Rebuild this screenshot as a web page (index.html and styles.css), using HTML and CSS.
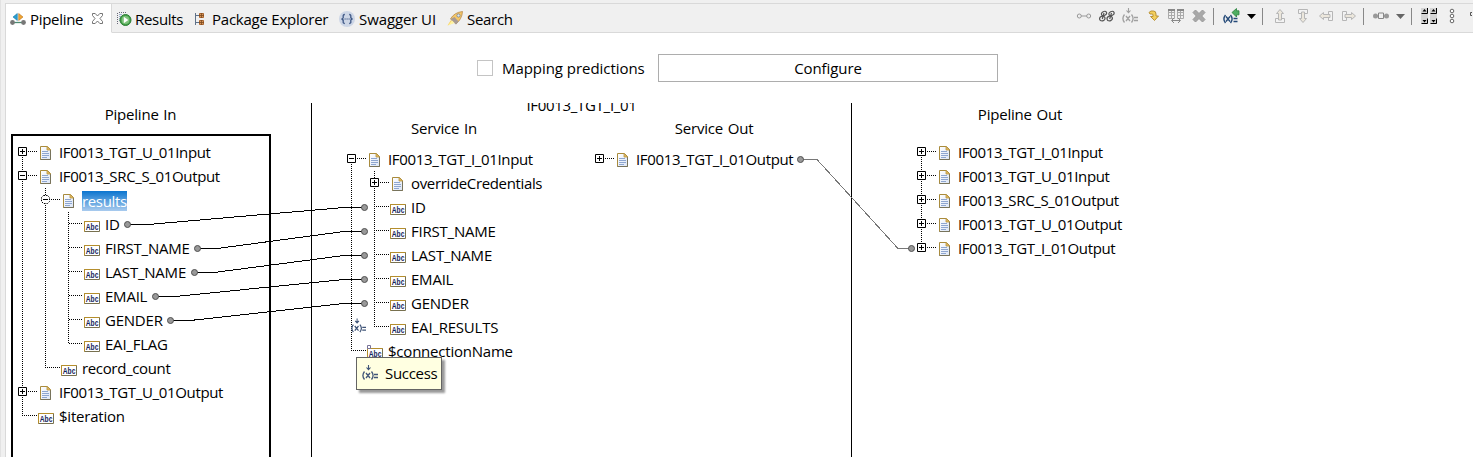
FILE: index.html
```html
<!DOCTYPE html>
<html lang="en">
<head>
<meta charset="utf-8">
<title>Pipeline</title>
<link rel="stylesheet" href="styles.css">
</head>
<body>
<svg class="defs" aria-hidden="true">
  <linearGradient id="page" x1="0" y1="0" x2="1" y2="1"><stop offset="0" stop-color="#fff"/><stop offset="1" stop-color="#dbe5f6"/></linearGradient>
  <symbol id="doc" viewBox="0 0 16 16">
    <path d="M2.500 1.500h7l3 3v10h-10z" fill="url(#page)" stroke="#a98b3c"/>
    <path d="M12.500 5v9.500h-10" fill="none" stroke="#77735c"/>
    <path d="M9 1.500v3.500h3.500z" fill="#e8bd62" stroke="#b89440" stroke-width=".8"/>
    <path d="M4 6.500h6M4 8.500h7M4 10.500h7M4 12.500h5" stroke="#8ea6d0" stroke-width="1"/>
  </symbol>
  <symbol id="abc" viewBox="0 0 16 16">
    <path d="M.5 4.500h15v10H.5z" fill="#fff" stroke="#77704f"/>
    <path d="M.5 14.500v-10h15" fill="none" stroke="#b58e2c"/>
    <text x="1.800" y="13" class="abc-text" textLength="12.600" lengthAdjust="spacingAndGlyphs">Abc</text>
  </symbol>
  <symbol id="plus" viewBox="0 0 9 9"><path d="M.5.5h8v8h-8z" fill="#fff" stroke="#000"/><path d="M2 4.500h5M4.500 2v5" stroke="#000"/></symbol>
  <symbol id="minus" viewBox="0 0 9 9"><path d="M.5.5h8v8h-8z" fill="#fff" stroke="#000"/><path d="M2 4.500h5" stroke="#000"/></symbol>
  <symbol id="minus-dot" viewBox="0 0 9 9"><path d="M2.500.5h4l2 2v4l-2 2h-4l-2-2v-4z" fill="#fff" stroke="#000" stroke-dasharray="1.600 1"/><path d="M2 4.500h5" stroke="#000"/></symbol>
  <symbol id="setval" viewBox="0 0 16 16">
    <path d="M6.500 0v4M4.500 2.500l2 2.200 2-2.200" fill="none" stroke="currentColor" stroke-width="1.100"/>
    <path d="M2.500 6.500q-3.200 4 0 8M9.500 6.500q3.200 4 0 8M4 8l4 5M8 8l-4 5M12 9.500h4M12 12.500h4" fill="none" stroke="currentColor" stroke-width="1.300"/>
  </symbol>
</svg>

<div class="view">
  <header class="tabbar">
    <nav class="tabs">
      <div class="tab tab-active">
        <svg class="i16" viewBox="0 0 16 16"><path d="M2 11.500h12" stroke="#4d8a72" stroke-width="1.300"/><circle cx="2.500" cy="11.500" r="2.400" fill="#777"/><circle cx="13.500" cy="11.500" r="2.400" fill="#777"/><path d="M7.300 2.500v7L3 6z" fill="#2a9fd0" stroke="#1476a8" stroke-width=".6"/><path d="M8.700 2.500v7L13 6z" fill="#f0a432" stroke="#b8741c" stroke-width=".6"/></svg>
        <span class="t-pipeline">Pipeline</span>
        <svg class="close" viewBox="0 0 11 11"><path d="M.5.5h2.700L5.500 3 7.800.5h2.700v2L8 5.500l2.500 3v2H7.800L5.500 8l-2.300 2.500H.5v-2L3 5.500l-2.500-3z" fill="#fff" stroke="#666" stroke-width=".9"/></svg>
      </div>
      <div class="tab tab-results">
        <svg class="i16" viewBox="0 0 16 16"><path d="M1.500 2v11M3 1.500h8" stroke="#667" stroke-dasharray="1 1"/><path d="M3 3.500h3M3 5.500h2M3 7.500h2M3 9.500h2" stroke="#9ab0d0"/><circle cx="9.500" cy="9" r="5.500" fill="#43a047" stroke="#2d7d36"/><circle cx="9.500" cy="9" r="3.900" fill="#7fc27c"/><path d="M7.800 5.700v6.600l4.500-3.300z" fill="#fff"/></svg>
        <span>Results</span>
      </div>
      <div class="tab tab-package">
        <svg class="i16" viewBox="0 0 16 16"><path d="M3.500 2v12M3.500 4.500h4M3.500 11.500h4" stroke="#5f7188" fill="none"/><path d="M7.500 2.500h4v4h-4zM7.500 9.500h4v4h-4z" fill="#d9985c" stroke="#a8642f"/><path d="M9.500 2v5M7 4.500h5M9.500 9v5M7 11.500h5" stroke="#7d4a1e" stroke-width=".8"/></svg>
        <span class="t-package">Package Explorer</span>
      </div>
      <div class="tab tab-swagger">
        <svg class="i16" viewBox="0 0 16 16"><circle cx="8" cy="8" r="8" fill="#cdd6e6"/><path d="M5.800 3.500q-2 0-1.600 2.200.3 2-1.700 2.300 2 .3 1.700 2.300-.4 2.200 1.600 2.200M10.200 3.500q2 0 1.600 2.200-.3 2 1.700 2.300-2 .3-1.700 2.300.4 2.200-1.600 2.200" fill="none" stroke="#3c5684" stroke-width="1.300"/><path d="M5.500 8h1.200M7.500 8h1.200M9.500 8h1.200" stroke="#3c5684" stroke-width="1.200"/></svg>
        <span class="t-swagger">Swagger UI</span>
      </div>
      <div class="tab tab-search">
        <svg class="i16" viewBox="0 0 16 16"><path d="M4 9l-3.500 5.500L6 12z" fill="#f8d15c"/><path d="M3.500 8Q7 1.500 15.500.5 15 8 9 13z" fill="#f5c768" stroke="#b88a4c" stroke-width=".8"/><path d="M3.500 8l4-2 4 4.500L9 13.500z" fill="#a79a94"/><path d="M1 14.500l4-5 2.500 2.500z" fill="#fff2a0"/><circle cx="11.500" cy="4.500" r="1.600" fill="#dce8f4" stroke="#76808f" stroke-width=".8"/></svg>
        <span class="t-search">Search</span>
      </div>
    </nav>
    <div class="toolbar">
      <svg class="i16" viewBox="0 0 16 16"><path d="M5 8h6" stroke="#999"/><circle cx="3.300" cy="8" r="2" fill="#eee" stroke="#999"/><circle cx="12.700" cy="8" r="2" fill="#eee" stroke="#999"/></svg>
      <svg class="i16" viewBox="0 0 16 16"><g fill="none" stroke="#555" stroke-width="1.200"><ellipse cx="5" cy="5.500" rx="2.700" ry="2" transform="rotate(-25 5 5.500)"/><ellipse cx="3.300" cy="10.500" rx="2.700" ry="2.300" transform="rotate(-25 3.300 10.500)"/><ellipse cx="12.500" cy="5.500" rx="2.700" ry="2" transform="rotate(-25 12.500 5.500)"/><ellipse cx="10.700" cy="10.500" rx="2.700" ry="2.300" transform="rotate(-25 10.700 10.500)"/><path d="M5 5l-1.700 6M12.500 5l-1.800 6"/></g></svg>
      <svg class="i16 muted"><use href="#setval"/></svg>
      <svg class="i16" viewBox="0 0 16 16"><path d="M4 4.500l2-1.500h2.500q2.500 0 2.500 3v2h2.500L9.500 12.500 5.500 8.500H8V7q0-1-1-1H5z" fill="#f3cf5c" stroke="#b28a2c" stroke-width=".9"/></svg>
      <svg class="i16" viewBox="0 0 16 16"><g fill="none" stroke="#aaa"><path d="M.5 1.500h6v9h-6zM9.500 1.500h6v9h-6zM.5 4.500h6M.5 7.500h6M3.500 1.500v9M9.500 4.500h6M9.500 7.500h6M12.500 1.500v9"/><path d="M0 2h7M9 2h7" stroke="#888" stroke-width="2"/><path d="M4 12.500h8M6 10l-2.500 2.500L6 15M10 10l2.500 2.500L10 15" stroke="#888"/></g></svg>
      <svg class="i16" viewBox="0 0 16 16"><path d="M2 4.500L4.500 2 8 5.500 11.500 2 14 4.500 10.700 8 14 11.500 11.500 14 8 10.500 4.500 14 2 11.500 5.300 8z" fill="#a8a8a8" stroke="#999"/></svg>
      <i class="sep"></i>
      <svg class="i16 wide" viewBox="0 0 18 16"><path d="M3.500 7q-3.200 4 0 8M8.500 7q3.200 4 0 8M4 8.500l4 5M8 8.500l-4 5M11.500 10.500h4M11.500 13.500h4" fill="none" stroke="#254a78" stroke-width="1.400"/><path d="M10 4.500L14.500.500v2.300h2.500v4h-2.500V9z" fill="#4fae62" stroke="#28813c" stroke-width=".8"/></svg>
      <svg class="caret" viewBox="0 0 9 5"><path d="M0 0h9L4.500 5z" fill="#000"/></svg>
      <i class="sep"></i>
      <svg class="i16 faint" viewBox="0 0 16 16"><path d="M3.500 10.500h9v4h-9z"/><path d="M8 1.500L11.500 5.500H9.500V12h-3V5.500h-2z" class="cream"/></svg>
      <svg class="i16 faint" viewBox="0 0 16 16"><path d="M3.500 1.500h9v4h-9z"/><path d="M8 14.500l3.500-4H9.500V4h-3v6.500h-2z" class="cream"/></svg>
      <svg class="i16 faint" viewBox="0 0 16 16"><path d="M10.500 3.500h4v9h-4z"/><path d="M1.500 8L5.500 4.500v2H12v3H5.500v2z" class="cream"/></svg>
      <svg class="i16 faint" viewBox="0 0 16 16"><path d="M1.500 3.500h4v9h-4z"/><path d="M14.500 8l-4-3.500v2H4v3h6.500v2z" class="cream"/></svg>
      <i class="sep"></i>
      <svg class="i16" viewBox="0 0 16 16"><path d="M2 8h12" stroke="#999"/><circle cx="2.500" cy="8" r="2.500" fill="#999"/><circle cx="13.500" cy="8" r="2.500" fill="#999"/><path d="M5.500 5h5v5.500h-5z" fill="#f0f0f0" stroke="#888"/></svg>
      <svg class="caret" viewBox="0 0 9 5"><path d="M0 0h9L4.500 5z" fill="#666"/></svg>
      <i class="sep"></i>
      <svg class="i16" viewBox="0 0 16 16"><path d="M0 0h7v16H0zM9 0h7v16H9z" fill="#d4d4d4"/><path d="M.5 5.500h6V0M.5 15.500h6V10.500M9.500 5.500h6V0M9.500 15.500h6V10.500" fill="none" stroke="#000"/><path d="M1.500 3.500h4L3.500 1zM10.500 3.500h4L12.500 1zM1.500 12h4L3.500 14.500zM10.500 12h4L12.500 14.500z" fill="#000"/></svg>
      <svg class="i16" viewBox="0 0 16 16"><g fill="#fff" stroke="#666"><circle cx="8" cy="3" r="1.800"/><circle cx="8" cy="8" r="1.800"/><circle cx="8" cy="13" r="1.800"/></g></svg>
      <svg class="last" viewBox="0 0 2 16"><path d="M2 4.500H.5v3H2" fill="none" stroke="#555"/></svg>
    </div>
  </header>

  <main class="content">
    <section class="controls">
      <span class="checkbox"></span>
      <span class="t-mapping">Mapping predictions</span>
      <div class="button"><span class="t-configure">Configure</span></div>
    </section>

    <section class="columns">
      <div class="column column-in">
        <h2 class="heading"><span>Pipeline In</span></h2>
        <div class="tree tree-framed">
          <div class="row"><svg class="toggle"><use href="#plus"/></svg><svg class="icon"><use href="#doc"/></svg><span class="label">IF0013_TGT_U_01Input</span></div>
          <div class="row"><svg class="toggle"><use href="#minus"/></svg><svg class="icon"><use href="#doc"/></svg><span class="label">IF0013_SRC_S_01Output</span></div>
          <div class="row d1"><svg class="toggle"><use href="#minus-dot"/></svg><svg class="icon"><use href="#doc"/></svg><span class="label selected">results</span></div>
          <div class="row d2"><i class="toggle"></i><svg class="icon"><use href="#abc"/></svg><span class="label field">ID</span></div>
          <div class="row d2"><i class="toggle"></i><svg class="icon"><use href="#abc"/></svg><span class="label field">FIRST_NAME</span></div>
          <div class="row d2"><i class="toggle"></i><svg class="icon"><use href="#abc"/></svg><span class="label field">LAST_NAME</span></div>
          <div class="row d2"><i class="toggle"></i><svg class="icon"><use href="#abc"/></svg><span class="label field">EMAIL</span></div>
          <div class="row d2"><i class="toggle"></i><svg class="icon"><use href="#abc"/></svg><span class="label field">GENDER</span></div>
          <div class="row d2"><i class="toggle"></i><svg class="icon"><use href="#abc"/></svg><span class="label field">EAI_FLAG</span></div>
          <div class="row d1"><i class="toggle"></i><svg class="icon"><use href="#abc"/></svg><span class="label">record_count</span></div>
          <div class="row"><svg class="toggle"><use href="#plus"/></svg><svg class="icon"><use href="#doc"/></svg><span class="label">IF0013_TGT_U_01Output</span></div>
          <div class="row"><i class="toggle"></i><svg class="icon"><use href="#abc"/></svg><span class="label field">$iteration</span></div>
        </div>
      </div>

      <div class="column column-service">
        <div class="service-title"><span>IF0013_TGT_I_01</span></div>
        <div class="service">
          <div class="service-in">
            <h2 class="heading"><span>Service In</span></h2>
            <div class="tree">
              <div class="row"><svg class="toggle"><use href="#minus"/></svg><svg class="icon"><use href="#doc"/></svg><span class="label">IF0013_TGT_I_01Input</span></div>
              <div class="row d1"><svg class="toggle"><use href="#plus"/></svg><svg class="icon"><use href="#doc"/></svg><span class="label">overrideCredentials</span></div>
              <div class="row d1"><i class="toggle"></i><svg class="icon"><use href="#abc"/></svg><span class="label field">ID</span></div>
              <div class="row d1"><i class="toggle"></i><svg class="icon"><use href="#abc"/></svg><span class="label field">FIRST_NAME</span></div>
              <div class="row d1"><i class="toggle"></i><svg class="icon"><use href="#abc"/></svg><span class="label field">LAST_NAME</span></div>
              <div class="row d1"><i class="toggle"></i><svg class="icon"><use href="#abc"/></svg><span class="label field">EMAIL</span></div>
              <div class="row d1"><i class="toggle"></i><svg class="icon"><use href="#abc"/></svg><span class="label field">GENDER</span></div>
              <div class="row d1"><i class="toggle"></i><svg class="icon"><use href="#abc"/></svg><span class="label field">EAI_RESULTS</span></div>
              <div class="row"><i class="toggle"></i><svg class="icon"><use href="#abc"/></svg><span class="label field">$connectionName</span></div>
            </div>
          </div>
          <div class="service-out">
            <h2 class="heading"><span>Service Out</span></h2>
            <div class="tree">
              <div class="row"><svg class="toggle"><use href="#plus"/></svg><svg class="icon"><use href="#doc"/></svg><span class="label">IF0013_TGT_I_01Output</span></div>
            </div>
          </div>
        </div>
      </div>

      <div class="column column-out">
        <h2 class="heading"><span>Pipeline Out</span></h2>
        <div class="tree">
          <div class="row"><svg class="toggle"><use href="#plus"/></svg><svg class="icon"><use href="#doc"/></svg><span class="label">IF0013_TGT_I_01Input</span></div>
          <div class="row"><svg class="toggle"><use href="#plus"/></svg><svg class="icon"><use href="#doc"/></svg><span class="label">IF0013_TGT_U_01Input</span></div>
          <div class="row"><svg class="toggle"><use href="#plus"/></svg><svg class="icon"><use href="#doc"/></svg><span class="label">IF0013_SRC_S_01Output</span></div>
          <div class="row"><svg class="toggle"><use href="#plus"/></svg><svg class="icon"><use href="#doc"/></svg><span class="label">IF0013_TGT_U_01Output</span></div>
          <div class="row"><svg class="toggle"><use href="#plus"/></svg><svg class="icon"><use href="#doc"/></svg><span class="label">IF0013_TGT_I_01Output</span></div>
        </div>
      </div>
    </section>
  </main>
</div>

<!-- Tree guides and mapping links, drawn over the three columns -->
<svg class="links" viewBox="0 0 1473 457">
  <g class="guides">
    <path d="M22.500 157v14M22.500 181v206M22.500 397v19M28 151.500h10M28 175.500h10M28 391.500h10M22 415.500h16"/>
    <path d="M45.500 188v7M45.500 205v163M51 199.500h10M45 367.500h16"/>
    <path d="M68.500 212v132M69 223.500h14M69 247.500h14M69 271.500h14M69 295.500h14M69 319.500h14M69 343.500h14"/>
    <path d="M351.500 164v187M357 158.500h10M351 350.500h16"/>
    <path d="M374.500 171v7M374.500 188v139M380 182.500h10M374 206.500h16M374 230.500h16M374 254.500h16M374 278.500h16M374 302.500h16M374 326.500h16"/>
    <path d="M605 158.500h10M921.500 157v14M921.500 181v14M921.500 205v14M921.500 229v14M927 151.500h10M927 175.500h10M927 199.500h10M927 223.500h10M927 247.500h10"/>
  </g>
  <g class="wires">
    <path d="M128 224.500h20L344 207.500h20"/>
    <path d="M197 248.500h20L344 231.500h20"/>
    <path d="M194 272.500h20L344 255.500h20"/>
    <path d="M155 296.500h20L344 279.500h20"/>
    <path d="M170 320.500h20L344 303.500h20"/>
    <path class="wire-gray" d="M800 159.500h17L898 248.500h14"/>
  </g>
  <g class="ports">
    <circle cx="127.500" cy="224.500" r="3"/><circle cx="197.500" cy="248.500" r="3"/><circle cx="194.500" cy="272.500" r="3"/><circle cx="155.500" cy="296.500" r="3"/><circle cx="170.500" cy="320.500" r="3"/>
    <circle cx="364.500" cy="207.500" r="3"/><circle cx="364.500" cy="231.500" r="3"/><circle cx="364.500" cy="255.500" r="3"/><circle cx="364.500" cy="279.500" r="3"/><circle cx="364.500" cy="303.500" r="3"/>
    <circle cx="800.500" cy="159.500" r="3"/><circle cx="911.500" cy="248.500" r="3"/>
  </g>
  <path d="M367.500 345.500h3v3h-3z" fill="#fff" stroke="#777299"/>
  <use href="#setval" x="351" y="318" width="15" height="16" color="#405578"/>
</svg>

<div class="tooltip"><svg class="i16"><use href="#setval"/></svg><span>Success</span></div>
</body>
</html>
```
FILE: styles.css
```css
* { box-sizing: border-box; }
body {
  margin: 0;
  height: 457px;
  position: relative;
  overflow: hidden;
  background: #f0f0f0;
  color: #000;
  font: 15px/24px "Open Sans", "Noto Sans", sans-serif;
  letter-spacing: -0.3px;
  white-space: nowrap;
}
svg { display: block; flex: none; }
.defs { position: absolute; width: 0; height: 0; }
.i16 { width: 16px; height: 16px; }
.view {
  height: 457px;
  padding: 3px 0 0 4px;
  border-left: 1px solid #e2e2e2;
  display: flex;
  flex-direction: column;
}

.tabbar {
  flex: none;
  height: 30px;
  display: flex;
  justify-content: space-between;
  border-top: 1px solid #d9d9d9;
  border-left: 1px solid #d9d9d9;
}
.tabs { display: flex; flex: 1; }
.tab {
  display: flex;
  align-items: center;
  gap: 4px;
  padding-top: 1px;
  border-bottom: 1px solid #d9d9d9;
}
.tab-active {
  width: 106px;
  padding-left: 4px;
  background: #fff;
  border-right: 1px solid #d9d9d9;
  border-bottom-color: #fff;
}
.close { width: 11px; height: 11px; margin-left: 5px; }
.tab-results { width: 80px; padding-left: 4px; gap: 3px; }
.tab-package { width: 146px; }
.t-package { letter-spacing: -0.24px; }
.tab-swagger { width: 108px; padding-left: 1px; }
.t-swagger { letter-spacing: -0.1px; }
.tab-search { flex: 1; padding-left: 1px; }

.toolbar {
  display: flex;
  align-items: center;
  gap: 7px;
  width: 397px;
  padding-bottom: 4px;
  border-bottom: 1px solid #d9d9d9;
}
.toolbar .sep { width: 1px; height: 17px; background: #888; margin: 0 2px 0 -1px; }
.toolbar .wide { width: 18px; margin-left: -1px; }
.toolbar .caret { width: 9px; height: 5px; }
.toolbar .last { width: 2px; height: 16px; margin-left: 3px; }
.muted { color: #a0a0a0; }
.faint { fill: #f3f3f3; stroke: #b6b6b6; }
.cream { fill: #ece7dc; }

.content {
  flex: 1;
  min-height: 0;
  display: flex;
  flex-direction: column;
  background: #fff;
  border-left: 1px solid #d9d9d9;
}
.controls {
  flex: none;
  height: 70px;
  display: flex;
  align-items: center;
  padding-left: 471px;
}
.checkbox { width: 16px; height: 16px; border: 1px solid #c4c4c4; margin-right: 9px; }
.t-mapping { width: 156px; letter-spacing: -0.05px; }
.button {
  width: 340px;
  height: 28px;
  border: 1px solid #adadad;
  text-align: center;
  line-height: 27px;
  letter-spacing: -0.1px;
}

.columns { flex: 1; min-height: 0; display: flex; overflow: hidden; }
.column { flex: none; }
.column-in {
  width: 306px;
  border-right: 1px solid #000;
  padding: 0 40px 0 5px;
  display: flex;
  flex-direction: column;
}
.column-service { width: 540px; border-right: 1px solid #000; }
.column-out { flex: 1; }
.heading {
  margin: 0;
  font: inherit;
  line-height: 22px;
  text-align: center;
  height: 31px;
  flex: none;
  letter-spacing: -0.2px;
  word-spacing: 1px;
}
.tree-framed { flex: 1; min-height: 0; border: 2px solid #000; border-bottom: 0; padding: 5px 0 0 5px; }
.row { display: flex; align-items: center; height: 24px; }
.d1 { padding-left: 23px; }
.d2 { padding-left: 46px; }
.toggle { width: 9px; height: 9px; margin: 0 11px 3px 0; flex: none; }
.icon { width: 16px; height: 16px; margin-right: 5px; }
.label { letter-spacing: -0.35px; line-height: 22px; margin-bottom: 2px; }
.field { letter-spacing: -0.22px; }
.selected { height: 20px; line-height: 20px; margin-bottom: 0; color: #fff; background: linear-gradient(#0b75cf, #a9cbee); }

.service-title { height: 14px; line-height: 5px; text-align: center; }
.service { display: flex; padding-left: 35px; }
.service-in { width: 248px; }
.service-in .heading { width: 194px; }
.service-out .heading { width: 238px; }
.service .heading { height: 31px; }
.column-out .heading { width: 336px; height: 38px; }
.column-out .tree { padding-left: 65px; }
.column-in .heading { width: 259px; }

.links { position: absolute; left: 0; top: 0; width: 1473px; height: 457px; }
.guides { fill: none; stroke: #000; stroke-dasharray: 1 1; shape-rendering: crispEdges; }
.wires { fill: none; stroke: #000; shape-rendering: crispEdges; }
.wires .wire-gray { stroke: #777; }
.ports { fill: #999; stroke: #505050; }
.abc-text { font: bold 9.500px "Liberation Sans", sans-serif; letter-spacing: 0; fill: #14245c; }

.tooltip {
  position: absolute;
  left: 356px;
  top: 357px;
  width: 86px;
  height: 33px;
  display: flex;
  align-items: center;
  gap: 7px;
  padding: 0 0 1px 5px;
  background: #ffffe1;
  border: 1px solid #646464;
  box-shadow: 3px 3px 2px rgba(0, 0, 0, .4);
}
.tooltip svg { color: #405578; }
```
